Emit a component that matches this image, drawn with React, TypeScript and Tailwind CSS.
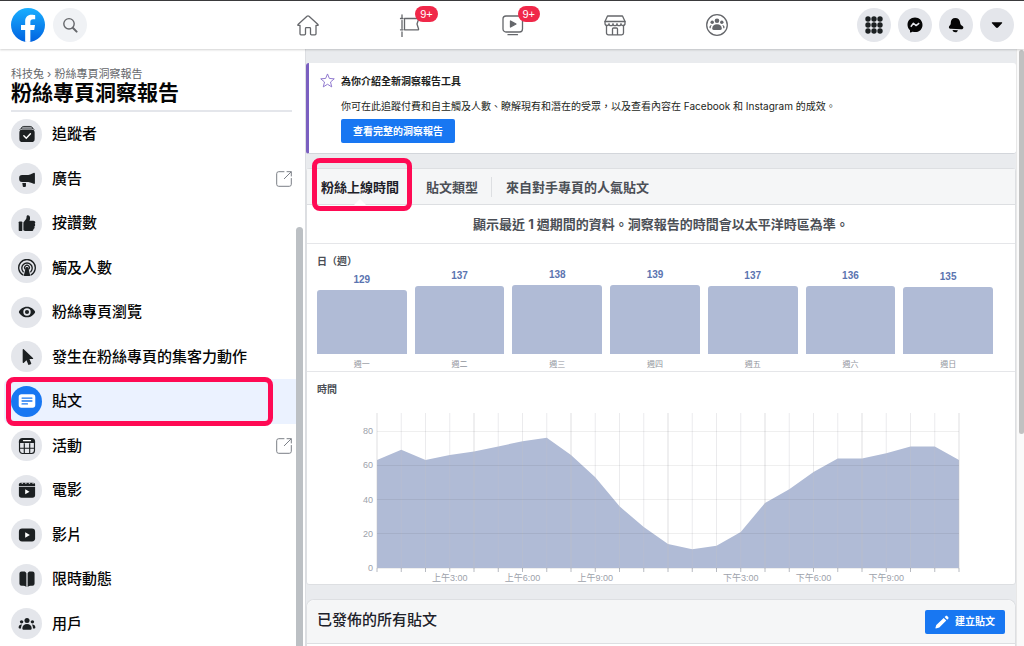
import type { ReactNode } from 'react';

const MENU_ITEMS = [
  { label: '追蹤者', icon: 'followers' },
  { label: '廣告', icon: 'ads', external: true },
  { label: '按讚數', icon: 'likes' },
  { label: '觸及人數', icon: 'reach' },
  { label: '粉絲專頁瀏覽', icon: 'views' },
  { label: '發生在粉絲專頁的集客力動作', icon: 'actions' },
  { label: '貼文', icon: 'posts', active: true },
  { label: '活動', icon: 'events', external: true },
  { label: '電影', icon: 'movies' },
  { label: '影片', icon: 'videos' },
  { label: '限時動態', icon: 'stories' },
  { label: '用戶', icon: 'people' },
];

const DAYS = [
  { label: '週一', fans: 129 },
  { label: '週二', fans: 137 },
  { label: '週三', fans: 138 },
  { label: '週四', fans: 139 },
  { label: '週五', fans: 137 },
  { label: '週六', fans: 136 },
  { label: '週日', fans: 135 },
];

const HOURS = [
  63, 69, 63, 66, 68, 71, 74, 76, 66, 53, 36, 24, 14,
  11, 13, 21, 38, 46, 56, 64, 64, 67, 71, 71, 63,
];

const HOUR_LABELS = [
  { hour: 3, label: '上午3:00' },
  { hour: 6, label: '上午6:00' },
  { hour: 9, label: '上午9:00' },
  { hour: 15, label: '下午3:00' },
  { hour: 18, label: '下午6:00' },
  { hour: 21, label: '下午9:00' },
];

// Filled glyphs for the sidebar, all on a 20x20 grid
const GLYPHS: Record<string, ReactNode> = {
  followers: (
    <>
      <path d="M3.5 4.2C4 2.2 5 1.6 6.500 1.600h7c1.500 0 2.500.6 3 2.600" fill="none" stroke="currentColor" strokeWidth="1" />
      <rect x="1.500" y="5" width="17" height="14" rx="3.500" />
      <path d="M2 5.200C3 3.800 4 3.400 5.500 3.400h9c1.500 0 2.500.4 3.500 1.800" fill="none" stroke="currentColor" strokeWidth="1" />
      <path d="m6.500 12 2.700 2.700 4.600-5" fill="none" stroke="#fff" strokeWidth="1.600" strokeLinecap="round" />
    </>
  ),
  ads: (
    <>
      <path d="M17.300 3.200c.8-.4 1.500 0 1.500.9v10.300c0 .9-.7 1.300-1.500.9-2.600-1.400-5-2-7.800-2H4.500a3.200 3.200 0 0 1-3.200-3.200V8.800a3.200 3.200 0 0 1 3.200-3.200h5c2.800 0 5.200-1 7.800-2.400Z" />
      <path d="M4.800 14.500h4v3.200c0 .7-.4 1.100-1.100 1.100H6.200c-.5 0-.8-.3-.9-.8Z" />
    </>
  ),
  likes: (
    <>
      <rect x="0.800" y="8.200" width="4" height="10.800" rx="1" />
      <path d="M6 9.500 9 5.500c.4-.6.500-1.300.5-2.200 0-1.200.5-1.800 1.500-1.800 1.600 0 2.400 1.300 2.400 3 0 1.100-.2 2-.6 3h4.200c1.300 0 2.200.8 2.200 1.900 0 .7-.3 1.200-.7 1.500.4.4.6.8.6 1.400 0 .8-.4 1.300-1 1.600.2.300.3.700.3 1.100 0 .8-.5 1.400-1.200 1.600.1.900-.5 2.400-2.400 2.400H10c-1.600 0-2.500-.3-4-1Z" />
    </>
  ),
  reach: (
    <>
      <g fill="none" stroke="currentColor" strokeWidth="1.500" strokeLinecap="round">
        <path d="M5.600 17.800a9.200 9.200 0 1 1 8.800 0" />
        <path d="M5.800 14.200a5.800 5.800 0 1 1 8.400 0" />
        <path d="M8 11.200a2.600 2.600 0 1 1 4 0" />
      </g>
      <path d="M10 9c1 0 1.500.6 1.700 1.600l1.700 7.200c.1.700-.2 1.200-.9 1.200h-5c-.7 0-1-.5-.9-1.200l1.700-7.200C8.500 9.600 9 9 10 9Z" />
    </>
  ),
  views: (
    <path
      fillRule="evenodd"
      d="M10 4.200c4.600 0 7.400 2.900 8.800 5.100.3.500.3.900 0 1.400-1.400 2.200-4.200 5.100-8.800 5.100s-7.400-2.900-8.800-5.100c-.3-.5-.3-.9 0-1.400C2.600 7.100 5.400 4.200 10 4.200Zm0 1.700a4.100 4.100 0 1 0 0 8.200 4.100 4.100 0 0 0 0-8.200Zm0 1.800a2.300 2.300 0 1 1 0 4.600 2.300 2.300 0 0 1 0-4.600Z"
    />
  ),
  actions: <path d="M5.200 1.800c0-.7.700-1 1.200-.5l10.200 9.700c.6.600.3 1.300-.5 1.300h-3.400l2 4.600c.2.500 0 .9-.5 1.100l-1.700.7c-.5.2-.9 0-1.100-.5l-2-4.600-2.800 2.700c-.7.600-1.400.4-1.400-.5Z" />,
  posts: (
    <>
      <rect x="0.800" y="2.500" width="18.400" height="15" rx="3" fill="#fff" />
      <path d="M4.500 6.700h11M4.500 10h11M4.500 13.300h6" stroke="#1877f2" strokeWidth="1.400" strokeLinecap="round" />
    </>
  ),
  events: (
    <>
      <path d="M5 1h10a4 4 0 0 1 4 4v1.800H1V5a4 4 0 0 1 4-4Z" />
      <path d="M6 4h8" stroke="#fff" strokeWidth="1.200" strokeLinecap="round" />
      <path d="M1.700 6v9A3.300 3.300 0 0 0 5 18.300h10a3.300 3.300 0 0 0 3.300-3.300V6M7 7v11M13 7v11M2 12.500h16" fill="none" stroke="currentColor" strokeWidth="1.300" />
    </>
  ),
  movies: (
    <>
      <path d="M1 6.500h18v9a3 3 0 0 1-3 3H4a3 3 0 0 1-3-3Z" />
      <path d="M3 2h14a2 2 0 0 1 2 2v1.500H1V4a2 2 0 0 1 2-2Z" />
      <path d="M4 2.500h1.500M8 2.500h1.500M12 2.500h1.500M16 2.500h1.500" stroke="#e4e6eb" strokeWidth="1.200" />
      <path d="M8 9.300v5.400l4.800-2.700Z" fill="#fff" />
    </>
  ),
  videos: (
    <>
      <rect x="1" y="2.800" width="18" height="14.400" rx="3.500" />
      <path d="M8 7v6l5.200-3Z" fill="#fff" />
    </>
  ),
  stories: (
    <>
      <path d="M9.300 3.500v15.300c-1-.8-2-1.200-3.400-1.200H4a2.400 2.400 0 0 1-2.400-2.400V4A2.400 2.400 0 0 1 4 1.600h2.500c1.300 0 2.300.6 2.800 1.900Z" />
      <path d="M10.700 3.500v15.300c1-.8 2-1.200 3.400-1.200H16a2.400 2.400 0 0 0 2.400-2.400V4A2.400 2.400 0 0 0 16 1.600h-2.500c-1.300 0-2.300.6-2.800 1.900Z" />
    </>
  ),
  people: (
    <>
      <circle cx="10" cy="6" r="2.800" />
      <circle cx="4" cy="7.600" r="1.900" />
      <circle cx="16" cy="7.600" r="1.900" />
      <path d="M10 10c3 0 5.200 2 5.200 4.800 0 1.100-.7 1.700-1.800 1.700H6.600c-1.100 0-1.800-.6-1.800-1.700C4.800 12 7 10 10 10Z" />
      <path d="M4.600 10.600C3.800 11.800 3.300 13 3.400 15H2c-.8 0-1.300-.4-1.300-1.200 0-1.800 1.500-3.400 3.900-3.200ZM15.400 10.600c.8 1.200 1.300 2.400 1.200 4.400H18c.8 0 1.300-.4 1.300-1.200 0-1.800-1.500-3.400-3.900-3.200Z" />
    </>
  ),
};

function Glyph({ name, className }: { name: string; className: string }) {
  return (
    <svg viewBox="0 0 20 20" fill="currentColor" className={className} aria-hidden="true">
      {GLYPHS[name]}
    </svg>
  );
}

function ExternalIcon() {
  return (
    <svg viewBox="0 0 16 16" fill="none" stroke="#7b7f86" strokeWidth="1" strokeLinecap="round" className="size-4" aria-hidden="true">
      <path d="M8 .7H2.700a2 2 0 0 0-2 2v10.600a2 2 0 0 0 2 2h10.600a2 2 0 0 0 2-2V7.500" />
      <path d="M11 .7h4.300V5M15 1 8.300 7.700" />
    </svg>
  );
}

function Badge({ children }: { children: ReactNode }) {
  return (
    <span className="absolute -top-[7px] left-[17px] flex h-4 items-center rounded-full bg-[#f02849] px-[5px] font-['Liberation_Sans',sans-serif] text-[11px] leading-4 text-white">
      {children}
    </span>
  );
}

function NavLink({ label, badge, children }: { label: string; badge?: string; children: ReactNode }) {
  return (
    <a href="#" aria-label={label} className="flex h-full items-center justify-center">
      <span className="relative">
        <svg viewBox="0 0 24 24" fill="none" stroke="#65676b" strokeWidth="1.300" strokeLinecap="round" strokeLinejoin="round" className="size-6">
          {children}
        </svg>
        {badge && <Badge>{badge}</Badge>}
      </span>
    </a>
  );
}

function RoundButton({ label, children }: { label: string; children: ReactNode }) {
  return (
    <button aria-label={label} className="flex size-[34px] items-center justify-center rounded-full bg-[#e4e6eb] text-[#050505]">
      {children}
    </button>
  );
}

function Header() {
  return (
    <header className="relative z-10 flex h-[49px] shrink-0 items-center border-t border-[#3a3a3c] bg-white pl-[11px] pr-[10px] shadow-[0_1px_2px_rgba(0,0,0,0.18)]">
      <div className="flex flex-1 items-center gap-2">
        <a href="#" aria-label="Facebook">
          <svg viewBox="0 0 36 36" className="size-[34px]">
            <defs>
              <linearGradient id="logo" x1="0" y1="0" x2="0" y2="1">
                <stop offset="0" stopColor="#1aafff" />
                <stop offset="1" stopColor="#0062e0" />
              </linearGradient>
            </defs>
            <circle cx="18" cy="18" r="18" fill="url(#logo)" />
            <path
              fill="#fff"
              d="M15 35.800V23.200h-4.400v-5.200H15v-3.900C15 9.700 17.600 7.200 21.700 7.200c1.900 0 3.900.4 3.900.4v4.300h-2.200c-2.200 0-2.900 1.400-2.900 2.800V18h4.900l-.8 5.200h-4.100v12.600a18 18 0 0 1-5.500 0Z"
            />
          </svg>
        </a>
        <button aria-label="搜尋" className="flex size-[34px] items-center justify-center rounded-full bg-[#f0f2f5]">
          <svg viewBox="0 0 16 16" fill="none" stroke="#65676b" className="size-4" aria-hidden="true">
            <circle cx="7" cy="6.800" r="5.200" strokeWidth="1.400" />
            <path d="m11 11 3.600 3.600" strokeWidth="2" strokeLinecap="round" />
          </svg>
        </button>
      </div>
      <nav className="grid h-full w-[51%] grid-cols-5">
        <NavLink label="首頁">
          <path d="M2 11.500 11 3.200q1-.8 2 0l9 8.300q.5.800-.4.800H20v8.500q0 1-1 1h-3.500q-1 0-1-1v-5.300q0-.8-.8-.8h-3.400q-.8 0-.8.8v5.300q0 1-1 1H5q-1 0-1-1v-8.500H2.400q-.9 0-.4-.8Z" />
        </NavLink>
        <NavLink label="粉絲專頁" badge="9+">
          <path d="M4 1.800v3M4 19v5M4 7.500v8M2.500 5.500H5M6.500 5.500h13.300q1 0 .7 1L19 11l1.500 4.800q.3 1-.7 1H6.500ZM2.500 16.800H5" />
        </NavLink>
        <NavLink label="Watch" badge="9+">
          <rect x="2" y="3" width="19.500" height="16" rx="3" />
          <path d="M7 21.700h9.500" />
          <path d="M9.500 8v6l5.500-3Z" fill="#65676b" />
        </NavLink>
        <NavLink label="Marketplace">
          <path d="M4.500 3h15L22 8.500v1.800a2 2 0 0 1-4 .4 2 2 0 0 1-4 0 2 2 0 0 1-4 0 2 2 0 0 1-4 0 2 2 0 0 1-4-.4V8.500Z" />
          <path d="M2 8.500h20M3.500 12.800V20a1.800 1.800 0 0 0 1.800 1.800h13.400a1.800 1.800 0 0 0 1.800-1.800v-7.200M9.500 21.500V16q0-1 1-1h3q1 0 1 1v5.500" />
        </NavLink>
        <NavLink label="社團">
          <circle cx="12" cy="12" r="10.300" />
          <g fill="#65676b" stroke="none">
            <circle cx="12" cy="7.800" r="2.300" />
            <circle cx="7.200" cy="9.200" r="1.700" />
            <circle cx="16.800" cy="9.200" r="1.700" />
            <path d="M12 11.300c3 0 4.800 2 4.800 4.200 0 1-.6 1.400-1.500 1.400H8.700c-.9 0-1.500-.4-1.500-1.400 0-2.200 1.800-4.200 4.800-4.200Z" />
            <path d="M6.800 12c-.8 1-1.100 2-1 3.300H4.700c-.7-1-.1-3.500 2.100-3.300ZM17.200 12c.8 1 1.100 2 1 3.300h1.100c.7-1 .1-3.500-2.100-3.300Z" />
          </g>
        </NavLink>
      </nav>
      <div className="flex flex-1 items-center justify-end gap-[7px]">
        <RoundButton label="功能表">
          <svg viewBox="0 0 18 18" fill="#1c2022" className="size-[18px]">
            {[3, 9, 15].map((y) => [3, 9, 15].map((x) => <circle key={`${x}-${y}`} cx={x} cy={y} r="2.700" />))}
          </svg>
        </RoundButton>
        <RoundButton label="Messenger">
          <svg viewBox="0 0 16 16" fill="currentColor" className="size-4">
            <path d="M8 .6C3.700.6.500 3.700.500 7.800c0 2.200.9 4 2.300 5.300.2.200.2.300.2.500v1.300c.1.500.5.700.9.500l1.500-.6c.2-.1.300-.1.500 0 .7.200 1.400.3 2.100.3 4.300 0 7.500-3.100 7.500-7.200S12.300.6 8 .6Z" />
            <path d="m3.800 9.700 2.600-3.400 2.700 2.300 3.100-2.400" fill="none" stroke="#e4e6eb" strokeWidth="1.500" strokeLinejoin="round" />
          </svg>
        </RoundButton>
        <RoundButton label="通知">
          <svg viewBox="0 0 16 16" fill="currentColor" className="size-4">
            <path d="M7.200.9c3 0 4.700 2 4.900 4.600.1 1.700.8 2.500 2 3.300 1 .7 1.500 1.300 1.200 2.200-.3 1-1.200 1.300-2.400 1.200l-9.800-.4c-1.300-.1-2.100-.5-2.200-1.300-.1-.8.4-1.400 1.100-2.200.7-.8.800-1.600.8-3.100C2.800 2.900 4.500.9 7.200.9Z" />
            <path d="m4.500 12.900 5.400.3c-.3 1.400-1.400 2.200-2.600 2-1.300-.1-2.400-.9-2.800-2.300Z" />
          </svg>
        </RoundButton>
        <RoundButton label="帳號">
          <svg viewBox="0 0 12 8" fill="currentColor" className="h-2 w-3">
            <path d="M1.500 1.200h9c.7 0 .9.600.5 1.100L7 6.500c-.6.600-1.400.6-2 0L1 2.300c-.4-.5-.2-1.100.5-1.100Z" />
          </svg>
        </RoundButton>
      </div>
    </header>
  );
}

function Sidebar() {
  return (
    <aside className="flex w-[306px] shrink-0 border-r border-[#dcdee2] bg-white">
      <div className="flex flex-1 flex-col">
        <div className="ml-[11px] mr-1 border-b-2 border-[#e4e6eb] pb-[7px] pt-[17px]">
          <p className="text-[11px] leading-4 text-[#65676b]">
            <a href="#">科技兔</a> › <a href="#">粉絲專頁洞察報告</a>
          </p>
          <h1 className="mt-px text-[21px] font-bold leading-5 text-[#050505]">粉絲專頁洞察報告</h1>
        </div>
        <ul className="grid flex-1 auto-rows-fr">
          {MENU_ITEMS.map((item) => (
            <li key={item.label} className="relative flex">
              <a
                href="#"
                className={`ml-1 flex flex-1 items-center rounded-l-md pl-[7px] pr-1 ${item.active ? 'bg-[#ebf2ff]' : ''}`}
              >
                <span
                  className={`flex size-[31px] shrink-0 items-center justify-center rounded-full ${
                    item.active ? 'bg-[#1877f2]' : 'bg-[#e4e6eb] text-[#1c2022]'
                  }`}
                >
                  <Glyph name={item.icon} className="size-[18px]" />
                </span>
                <span className="ml-[10px] flex-1 text-[15px] font-medium leading-5 text-[#050505]">{item.label}</span>
                {item.external && <ExternalIcon />}
              </a>
              {item.active && (
                <div className="pointer-events-none absolute -inset-y-[2px] left-[6px] right-[23px] rounded-lg border-[5px] border-[#ff0a54]" />
              )}
            </li>
          ))}
        </ul>
      </div>
      <div className="mr-[2px] w-[7px] pt-[178px]">
        <div className="h-full rounded-t-full bg-[#bcc0c4]" />
      </div>
    </aside>
  );
}

function IntroCard() {
  return (
    <section className="flex gap-[6px] rounded-[3px] border-b border-l-[3px] border-b-[#d3d6db] border-l-[#7a5fc0] bg-white pb-[10px] pl-[11px] pt-[9px]">
      <svg viewBox="0 0 16 16" fill="none" stroke="#8a72cc" strokeWidth="1" strokeLinejoin="round" className="mt-[1px] size-[15px] shrink-0" aria-hidden="true">
        <path d="m8 1 2 4.800 5.200.4-4 3.400 1.300 5.200L8 12l-4.500 2.800 1.300-5.200-4-3.400L6 5.800Z" />
      </svg>
      <div className="text-[10px] leading-[18px] text-[#1c1e21]">
        <h2 className="font-bold">為你介紹全新洞察報告工具</h2>
        <p className="mt-[7px]">你可在此追蹤付費和自主觸及人數、瞭解現有和潛在的受眾，以及查看內容在 Facebook 和 Instagram 的成效。</p>
        <button className="mt-1 h-6 rounded-[2px] bg-[#1877f2] px-3 font-bold leading-6 text-white">查看完整的洞察報告</button>
      </div>
    </section>
  );
}

function Tabs() {
  return (
    <div role="tablist" className="flex h-9 items-center border-b border-[#dddfe2] bg-[#f5f6f7] text-[13px] font-bold leading-5 text-[#4b4f56]">
      <button role="tab" aria-selected="true" className="relative flex h-full items-center pl-[14px] pr-[13px] text-[#1d2129]">
        粉絲上線時間
        <svg viewBox="0 0 12 6" fill="#fff" className="absolute -bottom-px left-1/2 h-[6px] w-3 -translate-x-1/2" aria-hidden="true">
          <path d="M0 6 6 0l6 6Z" />
        </svg>
        <span className="pointer-events-none absolute -bottom-[7px] -top-[11px] left-[5px] right-0 rounded-lg border-[5px] border-[#ff0a54]" />
      </button>
      <button role="tab" aria-selected="false" className="pl-[14px] pr-[13px]">貼文類型</button>
      <button role="tab" aria-selected="false" className="border-l border-[#dddfe2] pl-[14px] pr-[13px]">來自對手專頁的人氣貼文</button>
    </div>
  );
}

function DayChart() {
  return (
    <section className="border-b border-[#e5e6e9] pl-[10px] pr-[22px] pt-[10px]">
      <h3 className="text-[10px] font-bold leading-[14px] text-[#4b4f56]">日（週）</h3>
      <div className="grid grid-cols-7 items-end gap-2 text-center">
        {DAYS.map((day) => (
          <div key={day.label}>
            <div className="mb-[3px] font-['Liberation_Sans',sans-serif] text-[10px] font-bold leading-[14px] text-[#5b74b0]">{day.fans}</div>
            <div className="rounded-t-[3px] bg-[#b0bbd6]" style={{ height: Math.floor(day.fans / 2) }} />
            <div className="mt-[3px] text-[8px] leading-[14px] text-[#90949c]">{day.label}</div>
          </div>
        ))}
      </div>
    </section>
  );
}

const PLOT = { left: 60, right: 642, top: 17, bottom: 172 };
const hourX = (hour: number) => PLOT.left + (hour * (PLOT.right - PLOT.left)) / 24;
const fansY = (fans: number) => PLOT.bottom - (fans * 137) / 80;

function HourChart() {
  const line = HOURS.map((fans, hour) => `${hourX(hour)},${fansY(fans)}`).join(' ');
  return (
    <section className="pl-[10px] pr-[22px] pt-[10px]">
      <h3 className="text-[10px] font-bold leading-[14px] text-[#4b4f56]">時間</h3>
      <svg viewBox="0 0 676 188" className="block w-full text-[9px]" fill="#9da2ab" role="img" aria-label="粉絲上線時間">
        <polygon points={`${PLOT.left},${PLOT.bottom} ${line} ${PLOT.right},${PLOT.bottom}`} fill="#b0bbd6" />
        {HOURS.map((_, hour) => (
          <g key={hour}>
            <path
              d={`M${hourX(hour)} ${PLOT.top}V${PLOT.bottom}`}
              stroke="#c0c2c6"
              strokeOpacity={hour % 4 === 0 ? 0.5 : 0.32}
            />
            <path d={`M${hourX(hour)} ${PLOT.bottom}v4`} stroke="#b8bbc2" />
          </g>
        ))}
        {[0, 20, 40, 60, 80].map((fans) => (
          <g key={fans}>
            <path d={`M${PLOT.left} ${Math.floor(fansY(fans)) + 0.5}H${PLOT.right}`} stroke="#00000010" />
            <text x={PLOT.left - 4} y={fansY(fans) + 3} textAnchor="end" fontFamily="Liberation Sans, sans-serif">{fans}</text>
          </g>
        ))}
        {HOUR_LABELS.map(({ hour, label }) => (
          <text key={label} x={hourX(hour)} y="185" textAnchor="middle" fontFamily="Liberation Sans, Noto Sans CJK TC, sans-serif">{label}</text>
        ))}
      </svg>
    </section>
  );
}

function PostsCard() {
  return (
    <section className="flex flex-1 flex-col rounded-t-lg border border-b-0 border-[#dddfe2] bg-white">
      <div className="flex h-11 shrink-0 items-center justify-between rounded-t-lg border-b border-[#dddfe2] bg-[#f5f6f7] px-[10px]">
        <h2 className="pb-1 text-[15px] font-medium leading-5 text-[#1d2129]">已發佈的所有貼文</h2>
        <button className="flex h-6 items-center gap-[6px] rounded-[2px] bg-[#1877f2] px-[10px] text-[10px] font-bold text-white">
          <svg viewBox="0 0 14 14" fill="currentColor" className="size-[14px]" aria-hidden="true">
            <path d="m8.700 3 2.600 2.600-7 7L.9 13.400c-.3 0-.5-.2-.5-.5l.9-3Zm.9-.9.9-.9c.6-.6 1.300-.6 1.900 0l.7.7c.6.6.6 1.300 0 1.900l-.9.9Z" />
          </svg>
          建立貼文
        </button>
      </div>
    </section>
  );
}

export default function App() {
  return (
    <div className="flex h-screen flex-col overflow-hidden bg-[#e9ebee] font-['Inter','Noto_Sans_CJK_TC',sans-serif]">
      <Header />
      <div className="flex min-h-0 flex-1">
        <Sidebar />
        <main className="flex min-w-0 flex-1 flex-col gap-[14px] pt-[14px]">
          <IntroCard />
          <section className="rounded-[3px] border border-[#dddfe2] bg-white">
            <Tabs />
            <p className="border-b border-[#e5e6e9] py-[9px] text-center text-[13px] font-bold leading-5 text-[#4b4f56]">
              顯示最近 1 週期間的資料。洞察報告的時間會以太平洋時區為準。
            </p>
            <DayChart />
            <HourChart />
          </section>
          <PostsCard />
        </main>
        <div className="w-2 shrink-0 border-l border-[#e8e8e8] bg-[#fafafa] pl-[2px] pt-[1px]">
          <div className="h-[384px] rounded-full bg-[#c1c1c1]" />
        </div>
      </div>
    </div>
  );
}
